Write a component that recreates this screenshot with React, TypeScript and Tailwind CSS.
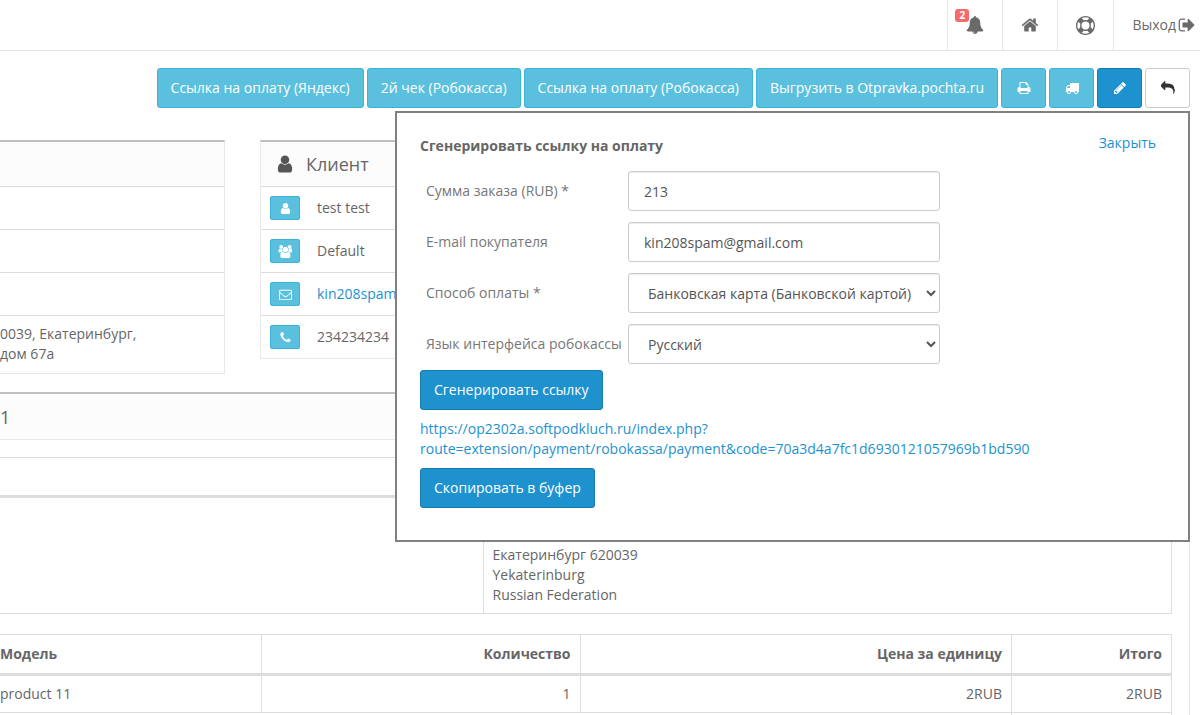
import React, { useState } from 'react';

type IconName =
  | 'bell'
  | 'home'
  | 'lifeRing'
  | 'signOut'
  | 'print'
  | 'truck'
  | 'pencil'
  | 'reply'
  | 'user'
  | 'group'
  | 'envelope'
  | 'phone';

const ICONS: Record<IconName, string> = {
  bell: 'M912 1696q0-16-16-16-59 0-101.5-42.5t-42.5-101.5q0-16-16-16t-16 16q0 73 51.5 124.5t124.5 51.5q16 0 16-16zm816-288q0 52-38 90t-90 38h-448q0 106-75 181t-181 75-181-75-75-181h-448q-52 0-90-38t-38-90q50-42 91-88t85-119.5 74.5-158.5 50-206 19.5-260q0-152 117-282.5t307-158.5q-8-19-8-39 0-40 28-68t68-28 68 28 28 68q0 20-8 39 190 28 307 158.5t117 282.5q0 139 19.5 260t50 206 74.5 158.5 85 119.5 91 88z',
  home: 'M1472 992v480q0 26-19 45t-45 19h-384v-384h-256v384h-384q-26 0-45-19t-19-45v-480q0-1 .5-3t.5-3l575-474 575 474q1 2 1 6zm223-69l-62 74q-8 9-21 11h-3q-13 0-21-7l-692-577-692 577q-12 8-24 7-13-2-21-11l-62-74q-8-10-7-23.5t11-21.5l719-599q32-26 76-26t76 26l244 204v-195q0-14 9-23t23-9h192q14 0 23 9t9 23v408l219 182q10 8 11 21.5t-7 23.5z',
  lifeRing:
    'M896 0q182 0 348 71t286 191 191 286 71 348-71 348-191 286-286 191-348 71-348-71-286-191-191-286-71-348 71-348 191-286 286-191 348-71zm0 128q-190 0-361 90l194 194q82-28 167-28t167 28l194-194q-171-90-361-90zm-678 1129l194-194q-28-82-28-167t28-167l-194-194q-90 171-90 361t90 361zm678 407q190 0 361-90l-194-194q-82 28-167 28t-167-28l-194 194q171 90 361 90zm0-384q159 0 271.5-112.5t112.5-271.5-112.5-271.5-271.5-112.5-271.5 112.5-112.5 271.5 112.5 271.5 271.5 112.5zm484-217l194 194q90-171 90-361t-90-361l-194 194q28 82 28 167t-28 167z',
  signOut:
    'M704 1440q0 4 1 20t.5 26.5-3 23.5-10 19.5-20.5 6.5h-320q-119 0-203.5-84.5t-84.5-203.5v-704q0-119 84.5-203.5t203.5-84.5h320q13 0 22.5 9.5t9.5 22.5q0 4 1 20t.5 26.5-3 23.5-10 19.5-20.5 6.5h-320q-66 0-113 47t-47 113v704q0 66 47 113t113 47h312l11.5 1 11.5 3 8 5.5 7 9 2 13.5zm928-544q0 26-19 45l-544 544q-19 19-45 19t-45-19-19-45v-288h-448q-26 0-45-19t-19-45v-384q0-26 19-45t45-19h448v-288q0-26 19-45t45-19 45 19l544 544q19 19 19 45z',
  print:
    'M448 1536h896v-256h-896v256zm0-640h896v-384h-160q-40 0-68-28t-28-68v-160h-640v640zm1152 64q0-26-19-45t-45-19-45 19-19 45 19 45 45 19 45-19 19-45zm128 0v416q0 13-9.5 22.5t-22.5 9.5h-224v160q0 40-28 68t-68 28h-960q-40 0-68-28t-28-68v-160h-224q-13 0-22.5-9.5t-9.5-22.5v-416q0-79 56.5-135.5t135.5-56.5h64v-544q0-40 28-68t68-28h672q40 0 88 20t76 48l152 152q28 28 48 76t20 88v256h64q79 0 135.5 56.5t56.5 135.5z',
  truck:
    'M640 1408q0-52-38-90t-90-38-90 38-38 90 38 90 90 38 90-38 38-90zm-384-512h384v-256h-158q-13 0-22 9l-195 195q-9 9-9 22v30zm1280 512q0-52-38-90t-90-38-90 38-38 90 38 90 90 38 90-38 38-90zm256-1088v1024q0 15-4 26.5t-13.5 18.5-16.5 11.5-23.5 6-22.5 2-25.5 0-22.5-.5q0 106-75 181t-181 75-181-75-75-181h-384q0 106-75 181t-181 75-181-75-75-181h-64q-3 0-22.5.5t-25.5 0-22.5-2-23.5-6-16.5-11.5-13.5-18.5-4-26.5q0-26 19-45t45-19v-320q0-8-.5-35t0-38 2.5-34.5 6.5-37 14-30.5 22.5-30l198-198q19-19 50.5-32t58.5-13h160v-192q0-26 19-45t45-19h1024q26 0 45 19t19 45z',
  pencil:
    'M491 1536l91-91-235-235-91 91v107h128v128h107zm523-928q0-22-22-22-10 0-17 7l-542 542q-7 7-7 17 0 22 22 22 10 0 17-7l542-542q7-7 7-17zm-54-192l416 416-832 832h-416v-416zm683 96q0 53-37 90l-166 166-416-416 166-165q36-38 90-38 53 0 91 38l235 234q37 39 37 91z',
  reply:
    'M1792 1120q0 166-127 451-3 7-10.5 24t-13.5 30-13 22q-12 17-28 17-15 0-23.5-10t-8.5-25q0-9 2.5-26.5t2.5-23.5q5-68 5-123 0-112-19.5-200.5t-54-153.5-89-111-117-77.5-149.5-46.5-171.5-23-196-7h-224v256q0 26-19 45t-45 19-45-19l-512-512q-19-19-19-45t19-45l512-512q19-19 45-19t45 19 19 45v256h224q713 0 875 403 53 134 53 333z',
  user: 'M1536 1399q0 109-62.5 187t-150.5 78h-854q-88 0-150.5-78t-62.5-187q0-85 8.5-160.5t31.5-152 58.5-131 94-89 134.5-34.5q131 128 313 128t313-128q76 0 134.5 34.5t94 89 58.5 131 31.5 152 8.5 160.5zm-256-887q0 159-112.5 271.5t-271.5 112.5-271.5-112.5-112.5-271.5 112.5-271.5 271.5-112.5 271.5 112.5 112.5 271.5z',
  group:
    'M657 896q-162 5-265 128h-134q-82 0-138-40.5t-56-118.5q0-353 124-353 6 0 43.5 21t97.5 42.5 119 21.5q67 0 133-23-5 37-5 66 0 159 90 293zm1071 637q0 120-73 189.5t-194 69.5h-874q-121 0-194-69.5t-73-189.5q0-53 3.5-103.5t14-109 26.5-108.5 43-97.5 62-81 85.5-53.5 111.5-20q10 0 43 21.5t73 48 107 48 135 21.5 135-21.5 107-48 73-48 43-21.5q61 0 111.5 20t85.5 53.5 62 81 43 97.5 26.5 108.5 14 109 3.5 103.5zm-1024-1277q0 106-75 181t-181 75-181-75-75-181 75-181 181-75 181 75 75 181zm704 384q0 159-112.5 271.5t-271.5 112.5-271.5-112.5-112.5-271.5 112.5-271.5 271.5-112.5 271.5 112.5 112.5 271.5zm576 225q0 78-56 118.5t-138 40.5h-134q-103-123-265-128 90-134 90-293 0-29-5-66 66 23 133 23 59 0 119-21.5t97.5-42.5 43.5-21q124 0 124 353zm-128-609q0 106-75 181t-181 75-181-75-75-181 75-181 181-75 181 75 75 181z',
  envelope:
    'M1664 1504v-768q-32 36-69 66-268 206-426 338-51 43-83 67t-86.5 48.5-102.5 24.5h-2q-48 0-102.5-24.5t-86.5-48.5-83-67q-158-132-426-338-37-30-69-66v768q0 13 9.5 22.5t22.5 9.5h1472q13 0 22.5-9.5t9.5-22.5zm0-1051v-24.5l-.5-13-3-12.5-5.5-9-9-7.5-14-2.5h-1472q-13 0-22.5 9.5t-9.5 22.5q0 168 147 284 193 152 401 317 6 5 35 29.5t46 37.5 44.5 31.5 50.5 27.5 43 9h2q20 0 43-9t50.5-27.5 44.5-31.5 46-37.5 35-29.5q208-165 401-317 54-43 100.5-115.5t46.5-131.5zm128-37v1088q0 66-47 113t-113 47h-1472q-66 0-113-47t-47-113v-1088q0-66 47-113t113-47h1472q66 0 113 47t47 113z',
  phone:
    'M1600 1240q0 27-10 70.5t-21 68.5q-21 50-122 106-94 51-186 51-27 0-53-3.5t-57.5-12.5-47-14.5-55.5-20.5-49-18q-98-35-175-83-127-79-264-216t-216-264q-48-77-83-175-3-9-18-49t-20.5-55.5-14.5-47-12.5-57.5-3.5-53q0-92 51-186 56-101 106-122 25-11 68.5-21t70.5-10q14 0 21 3 18 6 53 76 11 19 30 54t35 63.5 31 53.5q3 4 17.5 25t21.5 35.5 7 28.5q0 20-28.5 50t-62 55-62 53-28.5 46q0 9 5 22.5t8.5 20.5 14 24 11.5 19q76 137 174 235t235 174q2 1 19 11.5t24 14 20.5 8.5 22.5 5q18 0 46-28.5t53-62 55-62 50-28.5q14 0 28.5 7t35.5 21.5 25 17.5q25 15 53.5 31t63.5 35 54 30q70 35 76 53 3 7 3 21z',
};

const Icon: React.FC<{ name: IconName; className?: string }> = ({ name, className = 'size-[14px]' }) => (
  <svg
    viewBox={name === 'group' ? '0 0 2048 1792' : '0 0 1792 1792'}
    fill="currentColor"
    className={className}
    aria-hidden="true"
  >
    <path d={ICONS[name]} />
  </svg>
);

const button = 'flex h-10 items-center justify-center rounded-[3px] border';
const infoButton = `${button} border-[#39b3d7] bg-[#5bc0de] text-white`;
const primaryButton = `${button} border-[#197bb0] bg-[#1e91cf] text-white`;
const defaultButton = `${button} border-[#ccc] bg-white text-[#333]`;
const field = 'h-10 w-full rounded-[3px] border border-[#ccc] bg-white pl-[15px] text-[#555] shadow-[inset_0_1px_1px_rgba(0,0,0,0.075)]';

const textActions = [
  'Ссылка на оплату (Яндекс)',
  '2й чек (Робокасса)',
  'Ссылка на оплату (Робокасса)',
  'Выгрузить в Otpravka.pochta.ru',
];

const clientRows: { icon: IconName; title: string; text: string; href?: string }[] = [
  { icon: 'user', title: 'Клиент', text: 'test test' },
  { icon: 'group', title: 'Группа', text: 'Default' },
  { icon: 'envelope', title: 'E-mail', text: 'kin208spam@gmail.com', href: '#mail' },
  { icon: 'phone', title: 'Телефон', text: '234234234' },
];

const Header = () => (
  <header className="flex h-[51px] justify-end border-b border-[#e1e1e1] text-[#6a6a6a]">
    <button className="relative flex w-[55px] items-center justify-center border-l border-[#e8e8e8]" aria-label="Уведомления">
      <Icon name="bell" className="size-[18px]" />
      <span className="absolute top-[9px] left-[7px] rounded-[3px] bg-[#f56b6b] px-1 text-[10px] leading-[13px] font-bold text-white">
        2
      </span>
    </button>
    <a href="#home" className="flex w-[55px] items-center justify-center border-l border-[#e8e8e8]" aria-label="Магазин">
      <Icon name="home" className="size-[18px]" />
    </a>
    <a href="#help" className="flex w-[56px] items-center justify-center border-l border-[#e8e8e8]" aria-label="Помощь">
      <Icon name="lifeRing" className="size-[19px]" />
    </a>
    <a href="#logout" className="flex items-center gap-0.5 border-l border-[#e8e8e8] pr-1 pl-[18px]">
      Выход
      <Icon name="signOut" className="size-[18px]" />
    </a>
  </header>
);

const PaymentPopup = ({ onClose }: { onClose: () => void }) => {
  const [amount, setAmount] = useState('213');
  const [email, setEmail] = useState('kin208spam@gmail.com');

  return (
    <div className="absolute top-full right-0 z-10 mt-[3px] w-[795px] border-2 border-[#808080] bg-white px-[23px] pt-5 pb-8">
      <div className="flex items-start justify-between pr-[9px]">
        <h2 className="pt-[3px] leading-5 font-bold">Сгенерировать ссылку на оплату</h2>
        <button className="leading-5 text-[#1e91cf]" onClick={onClose}>Закрыть</button>
      </div>

      <div className="mt-[15px] mb-[6px] grid w-[520px] grid-cols-[202px_1fr] items-center gap-y-[11px] pl-[6px] text-[#777]">
        <label htmlFor="amount">Сумма заказа (RUB) *</label>
        <input id="amount" className={field} value={amount} onChange={(e) => setAmount(e.target.value)} />

        <label htmlFor="email">E-mail покупателя</label>
        <input id="email" className={field} value={email} onChange={(e) => setEmail(e.target.value)} />

        <label htmlFor="method">Способ оплаты *</label>
        <select id="method" className={field}>
          <option>Банковская карта (Банковской картой)</option>
        </select>

        <label htmlFor="language" className="whitespace-nowrap">Язык интерфейса робокассы</label>
        <select id="language" className={field}>
          <option>Русский</option>
        </select>
      </div>

      <button className={`${primaryButton} px-[13px]`}>Сгенерировать ссылку</button>
      <p className="my-[9px]">
        <a href="#pay" className="text-[#1e91cf]">
          https://op2302a.softpodkluch.ru/index.php?route=extension/payment/robokassa/payment&amp;code=70a3d4a7fc1d6930121057969b1bd590
        </a>
      </p>
      <button className={`${primaryButton} px-[13px]`}>Скопировать в буфер</button>
    </div>
  );
};

const App = () => {
  const [popupOpen, setPopupOpen] = useState(true);

  return (
    <div className="h-screen overflow-hidden bg-white font-['Open_Sans',sans-serif] text-[14px] leading-5 text-[#666]">
      <Header />

      <main className="pr-[10px]">
        {/* Order actions */}
        <div className="relative mt-[17px] flex justify-end gap-[3px]">
          {textActions.map((label) => (
            <button key={label} className={`${infoButton} px-[13px]`} onClick={() => setPopupOpen(true)}>{label}</button>
          ))}
          <button className={`${infoButton} w-[45px]`} aria-label="Печать"><Icon name="print" /></button>
          <button className={`${infoButton} w-[45px]`} aria-label="Доставка"><Icon name="truck" /></button>
          <button className={`${primaryButton} w-[45px]`} aria-label="Изменить"><Icon name="pencil" /></button>
          <button className={`${defaultButton} w-[45px]`} aria-label="Назад"><Icon name="reply" /></button>
          {popupOpen && <PaymentPopup onClose={() => setPopupOpen(false)} />}
        </div>

        {/* Order and client panels */}
        <div className="mt-8 flex items-start gap-[35px]">
          <section className="w-[225px] border-t-2 border-r border-b border-[#e8e8e8] border-t-[#bfbfbf]">
            <div className="h-11 bg-[#fcfcfc]" />
            <div className="h-[43px] border-t border-[#ddd]" />
            <div className="h-[43px] border-t border-[#ddd]" />
            <div className="h-[43px] border-t border-[#ddd]" />
            <div className="border-t border-[#ddd] pt-2 pb-[9px]">
              0039, Екатеринбург,
              <br />
              дом 67а
            </div>
          </section>

          <section className="w-[447px] border border-t-2 border-[#e8e8e8] border-t-[#bfbfbf]">
            <h3 className="flex h-11 items-center gap-[11px] bg-[#fcfcfc] pl-[14px] text-[18px]">
              <Icon name="user" className="size-5 text-[#555]" />
              Клиент
            </h3>
            {clientRows.map((row) => (
              <div key={row.title} className="flex h-[43px] items-center gap-[17px] border-t border-[#ddd] pl-[9px]">
                <button
                  className="flex h-6 w-[30px] items-center justify-center rounded-[2px] border border-[#39b3d7] bg-[#5bc0de] text-white"
                  aria-label={row.title}
                >
                  <Icon name={row.icon} className="h-[13px]" />
                </button>
                {row.href ? <a href={row.href} className="text-[#1e91cf]">{row.text}</a> : <span>{row.text}</span>}
              </div>
            ))}
          </section>
        </div>

        {/* Order details */}
        <section className="mt-[18px] border-t-2 border-r border-[#e8e8e8] border-t-[#bfbfbf]">
          <h3 className="flex h-[46px] items-center border-b border-[#e8e8e8] bg-[#fcfcfc] text-[18px]">1</h3>

          <div className="pt-[17px] pr-[17px]">
            <table className="w-full table-fixed border-collapse border border-l-0 border-[#ddd]">
              <colgroup>
                <col className="w-[483px]" />
                <col />
              </colgroup>
              <thead>
                <tr className="h-[39px] border-b-3 border-[#ddd]">
                  <th />
                  <th className="border-l border-[#ddd]" />
                </tr>
              </thead>
              <tbody>
                <tr className="h-[117px]">
                  <td />
                  <td className="border-l border-[#ddd] px-[9px] pb-2 align-bottom">
                    Екатеринбург 620039
                    <br />
                    Yekaterinburg
                    <br />
                    Russian Federation
                  </td>
                </tr>
              </tbody>
            </table>

            <table className="mt-5 w-full table-fixed border-collapse border border-l-0 border-[#ddd]">
              <colgroup>
                <col className="w-[261px]" />
                <col className="w-[319px]" />
                <col />
                <col className="w-[160px]" />
              </colgroup>
              <thead>
                <tr className="border-b-3 border-[#ddd]">
                  <th className="py-[9px] text-left">Модель</th>
                  <th className="border-l border-[#ddd] p-[9px] text-right">Количество</th>
                  <th className="border-l border-[#ddd] p-[9px] text-right">Цена за единицу</th>
                  <th className="border-l border-[#ddd] p-[9px] text-right">Итого</th>
                </tr>
              </thead>
              <tbody>
                <tr className="border-b border-[#ddd]">
                  <td className="py-2">product 11</td>
                  <td className="border-l border-[#ddd] px-[9px] py-2 text-right">1</td>
                  <td className="border-l border-[#ddd] px-[9px] py-2 text-right">2RUB</td>
                  <td className="border-l border-[#ddd] px-[9px] py-2 text-right">2RUB</td>
                </tr>
                <tr className="h-10">
                  <td colSpan={3} />
                  <td className="border-l border-[#ddd]" />
                </tr>
              </tbody>
            </table>
          </div>
        </section>
      </main>
    </div>
  );
};

export default App;
